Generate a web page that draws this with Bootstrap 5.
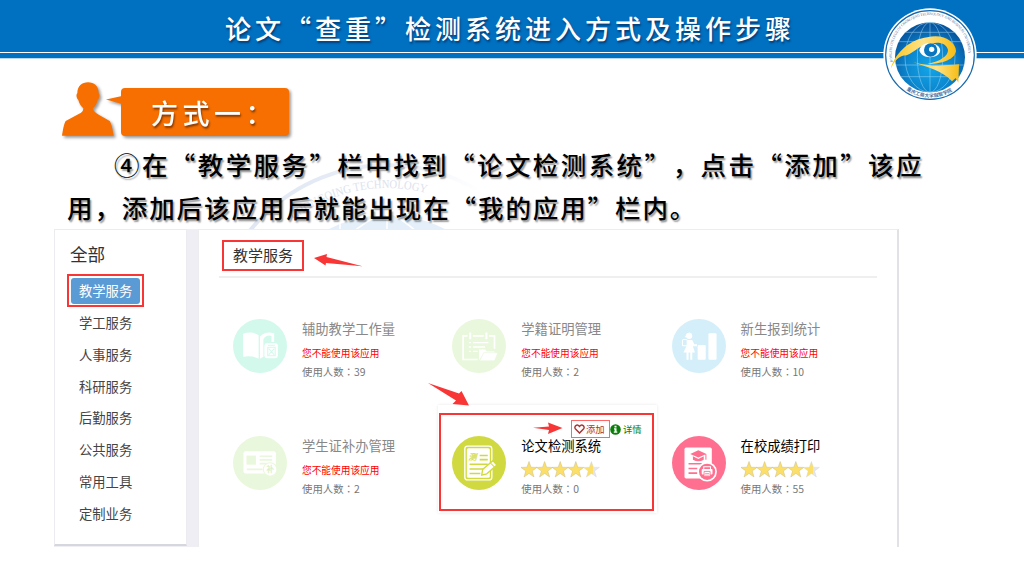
<!DOCTYPE html>
<html lang="zh-CN">
<head>
<meta charset="utf-8">
<title>论文“查重”检测系统进入方式及操作步骤</title>
<link rel="stylesheet" href="https://cdn.jsdelivr.net/npm/bootstrap@5.3.0/dist/css/bootstrap.min.css">
<style>
  body { width: 1024px; height: 576px; overflow: hidden; font-family: "Noto Sans CJK SC", "Noto Sans", sans-serif; background: #fff; color: #000; }
  .topbar { height: 59px; background: linear-gradient(#0070c0 0 52px, #fff 52px 53.5px, #0070c0 53.5px 58px, #b8d8ef 58px); }
  .topbar h1 { font-size: 26px; line-height: 56px; letter-spacing: 4px; padding-left: 225px; color: #fff; font-weight: 500; text-shadow: 1px 2px 2px rgba(0,20,60,.55); }
  .logo { left: 882px; top: 8px; }
  .way { height: 83px; padding: 21px 0 0 61px; filter: drop-shadow(2px 2px 1.5px rgba(0,0,0,.4)); }
  .person { margin-right: 6px; }
  .bubble { width: 168px; height: 48px; margin-top: 8px; border-radius: 4px; background: #f66f00; color: #fff; font-size: 27px; line-height: 50px; letter-spacing: 4.5px; padding-left: 30px; font-weight: 500; text-shadow: 1px 2px 2px rgba(60,20,0,.6); white-space: nowrap; }
  .tip { margin: 15px 0 0 45px; }
  .steps { height: 87px; padding-left: 67px; font-size: 25.5px; line-height: 43px; font-weight: 500; text-shadow: 1.5px 1.5px 1.5px rgba(0,0,0,.4); white-space: nowrap; }
  .line1 { padding-left: 47px; letter-spacing: 2.42px; }
  .line1 span { margin-right: 13px; }
  .line2 { letter-spacing: 1.9px; }
  .watermark { left: 200px; top: 155px; z-index: -1; }
  .shot { width: 845px; height: 318px; margin-left: 54px; background: #eeeef4; }
  .side { width: 133px; height: 317px; background: #fff; border: 1px solid #ececf0; border-bottom: 2px solid #d6d6de; padding: 11px 0 0 12px; }
  .side h2 { font-size: 17.6px; line-height: 26px; margin: 0 0 7px 3px; color: #333; font-weight: 400; }
  .side a { font-size: 13.3px; line-height: 31.8px; color: #444; text-decoration: none; padding-left: 12px; white-space: nowrap; }
  .side .current { width: 77px; height: 33px; border: 2px solid #f83636; padding: 2px; }
  .side .current a { background: #5b9bd5; color: #fff; border-radius: 3px; line-height: 26px; height: 26px; padding-left: 8px; }
  .content { width: 701px; background: #fff; border: 1px solid #ededf0; border-right: 2px solid #e2e2e6; border-bottom: 0; padding: 10px 20px 0 20px; }
  .heading { height: 38px; border-bottom: 2px solid #efeff0; padding-left: 3px; }
  .heading h2 { width: 82px; height: 31px; border: 2px solid #f83636; font-size: 15px; line-height: 25px; color: #333; padding-left: 9px; margin: 0; font-weight: 400; }
  .apps { display: grid; grid-template-columns: 219.3px 219.3px 219.3px; grid-auto-rows: 117px; padding: 26px 0 0 0; width: 658px; }
  .app-item { padding: 15px 0 0 14px; gap: 15px; }
  .app-item svg.ico { width: 54px; height: 54px; flex: none; }
  .app-item h3 { font-size: 13.3px; line-height: 20px; margin: 0; font-weight: 400; color: #888; white-space: nowrap; }
  .app-item .on { color: #000; }
  .deny { font-size: 9.7px; line-height: 14px; margin-top: 7px; color: #f00; white-space: nowrap; }
  .count { font-size: 10.4px; line-height: 14px; margin-top: 5px; color: #777; white-space: nowrap; }
  .count i { font-family: "Noto Sans CJK TC", sans-serif; font-style: normal; }
  .stars { height: 17px; width: 79px; margin-top: 5px; display: block; }
  .stars + .count { margin-top: 4px; }
  .hoverbox { left: 438px; top: 405px; width: 219px; height: 108px; box-shadow: 0 0 3px rgba(0,0,0,.1); z-index: 0; }
  .redbox { left: 439px; top: 413px; width: 215px; height: 98px; border: 2px solid #f83636; padding: 5px 0 0 129px; }
  .redbox > * { font-size: 9.3px; line-height: 14px; white-space: nowrap; }
  .addbtn { width: 39px; height: 18px; border: 1px solid #f66; color: #a33; gap: 1px; padding-left: 2px; margin-left: 1px; }
  .info { color: #0a800a; gap: 2px; height: 18px; }
  .arrows { left: 0; top: 0; pointer-events: none; }
</style>
</head>
<body class="position-relative">
<svg class="watermark position-absolute" width="310" height="80" viewBox="200 155 310 80">
  <defs>
    <linearGradient id="fade" gradientUnits="userSpaceOnUse" x1="240" x2="480" y1="0" y2="0"><stop stop-color="#dfe6f3"/><stop offset=".6" stop-color="#e9eef7"/><stop offset="1" stop-color="#fff"/></linearGradient>
    <path id="wmArc" d="M234 341A153 153 0 0 1 540 341"/>
  </defs>
  <circle cx="387" cy="341" r="176" fill="none" stroke="url(#fade)" stroke-width="4"/>
  <text font-family="Liberation Serif, serif" font-size="12" fill="#dde2ec"><textPath href="#wmArc" startOffset="140" textLength="140" lengthAdjust="spacingAndGlyphs">CHONGQING TECHNOLOGY</textPath></text>
  <circle cx="387" cy="341" r="126" fill="#e4effa"/>
  <path d="M387 210C350 230 330 250 320 270M387 210C410 225 430 240 440 260M340 212V235M387 210V240" stroke="#fff" fill="none" stroke-width="1.5"/>
</svg>

<header class="topbar"><h1 class="m-0">论文“查重”检测系统进入方式及操作步骤</h1></header>

<svg class="logo position-absolute" width="96" height="94" viewBox="36 24 288 282">
  <defs>
    <radialGradient id="globe" cx=".5" cy=".65" r=".6"><stop stop-color="#13a5e8"/><stop offset=".55" stop-color="#0b87cf"/><stop offset="1" stop-color="#07569f"/></radialGradient>
    <linearGradient id="gold" x1="0" x2="1"><stop stop-color="#f9c51e"/><stop offset=".5" stop-color="#ffe38a"/><stop offset="1" stop-color="#f8bd12"/></linearGradient>
    <path id="topArc" d="M69 190A115 115 0 1 1 291 190"/>
    <path id="botArc" d="M106 267A124 124 0 0 0 256 267"/>
  </defs>
  <circle cx="180" cy="165" r="140" fill="#fff"/>
  <circle cx="180" cy="165" r="133" fill="none" stroke="#1769ad" stroke-width="3.500"/>
  <circle cx="180" cy="172" r="105" fill="url(#globe)"/>
  <g fill="none" stroke="#a8dcf5" stroke-width="1.800" opacity=".8">
    <path d="M180 67V277M76 195H284M92 230H268M86 125H274M104 97H256"/>
    <ellipse cx="180" cy="172" rx="38" ry="105"/><ellipse cx="180" cy="172" rx="75" ry="105"/>
  </g>
  <path d="M62 206C78 153 124 118 172 112C221 99 258 128 258 153C254 177 220 192 172 192C212 184 235 167 234 150C231 131 207 124 186 130C150 134 134 157 110 166C86 166 75 183 62 206Z" fill="url(#gold)"/>
  <path d="M130 186C178 201 220 197 267 193L265 248L257 234L246 244C217 211 170 202 130 186Z" fill="url(#gold)"/>
  <path d="M148 151C153 130 178 124 199 134C216 145 214 161 196 169C176 175 153 171 148 151Z" fill="#fff"/>
  <circle cx="182" cy="150" r="20" fill="#0875be"/><circle cx="185" cy="148" r="8" fill="#fff"/>
  <text font-family="Liberation Serif, serif" font-size="11" fill="#4a6c9c"><textPath href="#topArc" startOffset="4" textLength="388" lengthAdjust="spacingAndGlyphs">RONGZHI COLLEGE OF CHONGQING TECHNOLOGY AND BUSINESS UNIVERSITY</textPath></text>
  <text font-size="14.500" font-weight="500" fill="#27568f"><textPath href="#botArc" startOffset="4">重庆工商大学融智学院</textPath></text>
</svg>

<section class="way d-flex align-items-start">
  <svg class="person" width="54" height="56" viewBox="0 0 162 168">
    <path fill="#f66f00" d="M49 40C49 18 63 7 81 7S113 18 113 40C118 44 115 56 110 60C107 72 102 79 96 85C96 93 103 99 113 104L146 123C151 131 155 149 158 167H3C6 149 9 131 14 123L53 102C62 98 67 94 67 85C61 79 55 72 52 60C47 56 44 44 49 40Z"/>
  </svg>
  <svg class="tip position-absolute" width="16" height="10" viewBox="0 0 16 10"><path d="M0 4.500L16 1V9Z" fill="#f66f00"/></svg>
  <div class="bubble">方式一：</div>
</section>

<section class="steps">
  <div class="line1">④在“教学服务”栏中找到“论文检测系统<span>”</span>，点击“添加”该应</div>
  <div class="line2">用，添加后该应用后就能出现在“我的应用”栏内。</div>
</section>

<main class="shot d-flex justify-content-between">
  <nav class="side d-flex flex-column">
    <h2>全部</h2>
    <div class="current"><a href="#" class="d-block">教学服务</a></div>
    <a href="#">学工服务</a>
    <a href="#">人事服务</a>
    <a href="#">科研服务</a>
    <a href="#">后勤服务</a>
    <a href="#">公共服务</a>
    <a href="#">常用工具</a>
    <a href="#">定制业务</a>
  </nav>
  <section class="content">
    <div class="heading"><h2>教学服务</h2></div>
    <div class="apps">
      <div class="app-item d-flex align-items-start">
        <svg class="ico" viewBox="0 0 160 160"><circle cx="80" cy="80" r="80" fill="#d2f9ec"/>
          <path fill="#fff" d="M30 44Q54 34 76 48V118Q54 106 30 112Z"/>
          <path fill="#fff" d="M80 118V52Q95 36 122 42V68H114V50Q98 46 90 60V112Z"/>
          <rect x="93" y="72" width="40" height="44" rx="7" fill="#fff"/><path d="M103 84H125V109H103ZM106 88L122 106M122 88L106 106M103 78H124" stroke="#d2f9ec" fill="none" stroke-width="3"/></svg>
        <div><h3>辅助教学工作量</h3><div class="deny">您不能使用该应用</div><div class="count">使用人数<i lang="zh-TW">：</i>39</div></div>
      </div>
      <div class="app-item d-flex align-items-start">
        <svg class="ico" viewBox="0 0 160 160"><circle cx="80" cy="80" r="80" fill="#e9f8dc"/>
          <g fill="none" stroke="#fff" stroke-width="5"><path d="M76 120H33V50H46M62 50H94M110 50H126V88"/><path d="M54 40V60M102 40V60" stroke-width="6"/><path d="M50 70H56M62 70H108M50 83H56M62 83H98M50 96H56M62 96H76" stroke-width="4"/></g>
          <path d="M80 122V90H98L104 96H126V102H94Z" fill="#fff"/><path d="M94 100H136L126 124H82Z" fill="#fff" stroke="#e9f8dc" stroke-width="2"/></svg>
        <div><h3>学籍证明管理</h3><div class="deny">您不能使用该应用</div><div class="count">使用人数<i lang="zh-TW">：</i>2</div></div>
      </div>
      <div class="app-item d-flex align-items-start">
        <svg class="ico" viewBox="0 0 160 160"><circle cx="80" cy="80" r="80" fill="#d4effa"/>
          <g fill="#fff"><rect x="76" y="77" width="24" height="44" rx="3"/><rect x="108" y="42" width="24" height="79" rx="3"/><circle cx="51" cy="50" r="9"/><path d="M38 54L44 43L54 40L47 55ZM46 62H60L66 75H74V81H62L68 99H60V121H54V99H49V121H43V99H34L44 78Z"/></g><rect x="31" y="61" width="14" height="18" rx="3" fill="none" stroke="#fff" stroke-width="3"/></svg>
        <div><h3>新生报到统计</h3><div class="deny">您不能使用该应用</div><div class="count">使用人数<i lang="zh-TW">：</i>10</div></div>
      </div>
      <div class="app-item d-flex align-items-start">
        <svg class="ico" viewBox="0 0 160 160"><circle cx="80" cy="80" r="80" fill="#e9f8dc"/>
          <rect x="31" y="45" width="96" height="66" rx="6" fill="#fff"/><rect x="40" y="58" width="28" height="27" fill="#e9f8dc"/><path d="M79 60H116M79 71H116M79 82H100M41 99H88" stroke="#e9f8dc" stroke-width="5"/>
          <circle cx="110" cy="99" r="20" fill="#fff" stroke="#e9f8dc" stroke-width="3"/><text x="110" y="107" text-anchor="middle" font-size="22" font-weight="700" fill="#dcefc8">补</text></svg>
        <div><h3>学生证补办管理</h3><div class="deny">您不能使用该应用</div><div class="count">使用人数<i lang="zh-TW">：</i>2</div></div>
      </div>
      <div class="app-item d-flex align-items-start">
        <svg class="ico" viewBox="0 0 160 160"><circle cx="80" cy="80" r="80" fill="#d0da40"/>
          <rect x="38" y="30" width="80" height="100" rx="8" fill="none" stroke="#fff" stroke-width="4"/><rect x="44" y="36" width="68" height="88" rx="5" fill="#fff"/>
          <text x="48" y="72" font-size="25" font-style="italic" font-weight="700" fill="#d0da40">测</text>
          <path d="M82 58H106M82 70H106M52 84H106M52 98H92M52 111H84" stroke="#d0da40" stroke-width="4.500"/>
          <path d="M88 116L91 99L121 73L133 86L103 112Z" fill="#fff" stroke="#d0da40" stroke-width="4"/><path d="M114 80L126 92" stroke="#d0da40" stroke-width="3"/></svg>
        <div><h3 class="on">论文检测系统</h3>
          <svg class="stars" viewBox="0 0 79 17"><defs><path id="star" d="M8 .5L10 6.200L16 6.400L11.200 10L13 16L8 12.400L3 16L4.800 10L0 6.400L6 6.200Z"/><linearGradient id="half"><stop offset=".58" stop-color="#fbdf68"/><stop offset=".58" stop-color="#e4e6ec"/></linearGradient></defs>
            <g fill="#fbdf68" stroke="#c9bd90" stroke-width=".5"><use href="#star"/><use href="#star" x="15.600"/><use href="#star" x="31.200"/><use href="#star" x="46.800"/></g><use href="#star" x="62.400" fill="url(#half)" stroke="#d5d5d0" stroke-width=".4"/></svg>
          <div class="count">使用人数<i lang="zh-TW">：</i>0</div></div>
      </div>
      <div class="app-item d-flex align-items-start">
        <svg class="ico" viewBox="0 0 160 160"><circle cx="80" cy="80" r="80" fill="#ff6f8f"/>
          <rect x="37" y="34" width="81" height="92" rx="5" fill="#fff"/>
          <path d="M54 53L78 42L102 53L78 64ZM62 60L78 68L94 60V70Q78 79 62 70ZM99 54H102V70H99Z" fill="#ff6f8f"/>
          <path d="M49 82H88M49 96H75M49 110H75" stroke="#ff6f8f" stroke-width="4.500"/>
          <circle cx="104" cy="106" r="29" fill="#fff"/><circle cx="104" cy="106" r="24" fill="#ff6f8f"/>
          <path d="M94 98V91H114V98" fill="none" stroke="#fff" stroke-width="3"/><rect x="88" y="98" width="32" height="16" rx="3" fill="#fff"/><path d="M95 105H113V120H95Z" fill="#fff" stroke="#ff6f8f" stroke-width="2.500"/><path d="M98 111H110M98 116H110" stroke="#ff6f8f" stroke-width="2"/></svg>
        <div><h3 class="on">在校成绩打印</h3>
          <svg class="stars" viewBox="0 0 79 17"><g fill="#fbdf68" stroke="#c9bd90" stroke-width=".5"><use href="#star"/><use href="#star" x="15.600"/><use href="#star" x="31.200"/><use href="#star" x="46.800"/></g><use href="#star" x="62.400" fill="url(#half)" stroke="#d5d5d0" stroke-width=".4"/></svg>
          <div class="count">使用人数<i lang="zh-TW">：</i>55</div></div>
      </div>
    </div>
  </section>
</main>

<div class="hoverbox position-absolute"></div>
<div class="redbox position-absolute d-flex align-items-start">
  <div class="addbtn d-flex align-items-center">
    <svg width="11" height="10" viewBox="0 0 10 9"><path d="M5 8.200L1.200 4.300C-.3 2.300 2.700-.6 5 2.200C7.300-.6 10.300 2.300 8.800 4.300Z" fill="none" stroke="#a33" stroke-width="1.300"/></svg><span>添加</span>
  </div>
  <div class="info d-flex align-items-center">
    <svg width="11" height="11" viewBox="0 0 11 11"><circle cx="5.500" cy="5.500" r="5.300" fill="#0a800a"/><path d="M4.500 1.800H6.500V3.400H4.500ZM4 4.300H6.500V7.600H7.300V8.800H3.800V7.600H4.600V5.400H4Z" fill="#fff"/></svg><span>详情</span>
  </div>
</div>
<svg class="arrows position-absolute" width="1024" height="576" viewBox="0 0 1024 576" fill="#f83636">
  <path d="M314 258L327 254L326.500 257L362.500 266.300L326 263L325.500 265.500Z"/>
  <path d="M428 383L459 393.500L461.500 391L469 405.500L452.500 404L456 400.500Z"/>
  <path d="M533 427.800L549 426.500L548 422.500L562.500 428L548 434L549 430Z"/>
</svg>
<script src="https://cdn.jsdelivr.net/npm/bootstrap@5.3.0/dist/js/bootstrap.bundle.min.js"></script>
</body>
</html>
